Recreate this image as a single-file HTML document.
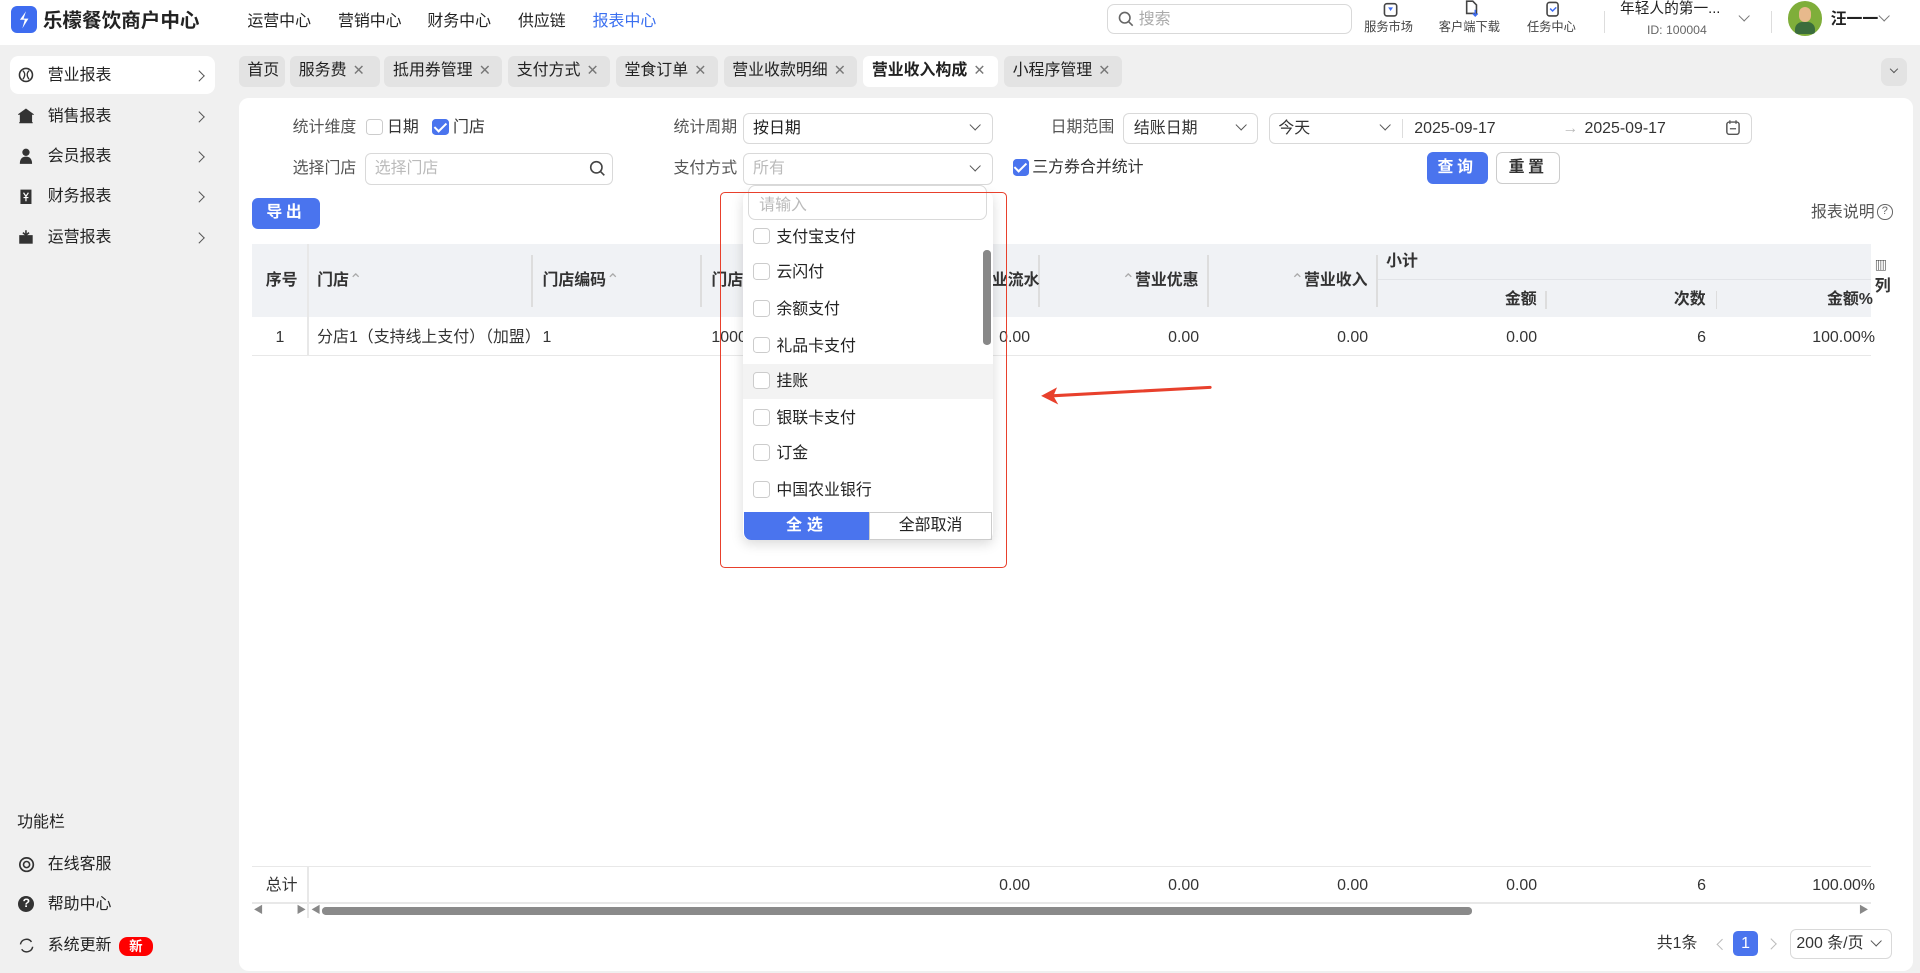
<!DOCTYPE html>
<html><head><meta charset="utf-8">
<style>
html,body{margin:0;padding:0;overflow:hidden}
body{width:1920px;height:973px;background:#f0f0f0;font-family:"Liberation Sans","Noto Sans CJK SC",sans-serif;color:#333}
#w{position:absolute;left:0;top:0;width:1568px;height:795px;zoom:1.22449;font-size:13px;line-height:16px}
.a{position:absolute;white-space:nowrap}
.hdr{left:0;top:0;width:1568px;height:37px;background:#fff}
.nav{top:10px;font-size:13px;color:#222}
.cb{position:absolute;width:12px;height:12px;border:1px solid #ccc;border-radius:3px;background:#fff}
.cbk{background:#4a74ee;border-color:#4a74ee}
.cbk:after{content:"";position:absolute;left:3px;top:0px;width:4px;height:8px;border:solid #fff;border-width:0 2px 2px 0;transform:rotate(45deg)}
.inp{position:absolute;border:1px solid #d9d9d9;border-radius:5px;background:#fff;box-sizing:border-box}
.chev{position:absolute;width:6px;height:6px;border:solid #555;border-width:0 1.3px 1.3px 0;transform:rotate(45deg)}
.chr{position:absolute;width:6px;height:6px;border:solid #555;border-width:1.3px 1.3px 0 0;transform:rotate(45deg)}
.tab{position:absolute;top:46px;height:25px;line-height:25px;background:#e3e3e3;border-radius:5px;padding:0 7px;font-size:13px;color:#222;box-sizing:border-box;white-space:nowrap;overflow:hidden}
.tab i{font-style:normal;color:#777;margin-left:5px;font-size:12px}
.side{left:39px;font-size:13px;color:#222}
.th{font-weight:bold;color:#333}
.dd{top:0;font-size:13px;color:#222}
</style></head><body>
<div id="w">
<div class="a hdr"></div>
<div class="a" style="left:9px;top:5px;width:21px;height:22px;background:#3e6cf0;border-radius:5px"></div>
<svg class="a" style="left:12px;top:8px" width="15" height="16" viewBox="0 0 15 16"><path d="M9 1 L4 8 L8 8 L6 15 L11 7 L7 7 Z" fill="#fff"/></svg>
<div class="a" style="left:35px;top:7px;font-size:16px;line-height:20px;font-weight:bold;color:#222">乐檬餐饮商户中心</div>
<div class="a nav" style="left:202px">运营中心</div>
<div class="a nav" style="left:276px">营销中心</div>
<div class="a nav" style="left:349px">财务中心</div>
<div class="a nav" style="left:423px">供应链</div>
<div class="a nav" style="left:484px;color:#3a6ff0">报表中心</div>
<div class="inp" style="left:904px;top:3px;width:200px;height:25px;border-radius:6px"></div>
<svg class="a" style="left:913px;top:9px" width="13" height="13"><circle cx="5.5" cy="5.5" r="4.3" stroke="#666" stroke-width="1.3" fill="none"/><path d="M8.7 8.7 L12 12" stroke="#666" stroke-width="1.3"/></svg>
<div class="a" style="left:930px;top:8px;color:#aaa;font-size:13px">搜索</div>
<svg class="a" style="left:1129px;top:0" width="14" height="14"><rect x="2" y="3" width="10" height="10" rx="2" fill="none" stroke="#444" stroke-width="1.3"/><path d="M5 6 h4 l-2 3z" fill="#3e6cf0"/></svg>
<svg class="a" style="left:1195px;top:0" width="14" height="14"><path d="M3 1 h5 l3 3 v7 h-8z" fill="none" stroke="#444" stroke-width="1.3"/><path d="M10 8 v5 M8 11 l2 2 l2-2" stroke="#3e6cf0" fill="none" stroke-width="1.2"/></svg>
<svg class="a" style="left:1261px;top:0" width="14" height="14"><rect x="2.5" y="2" width="9" height="11" rx="2" fill="none" stroke="#444" stroke-width="1.3"/><path d="M5 7 l2 2 l3-3" stroke="#3e6cf0" fill="none" stroke-width="1.2"/></svg>
<div class="a" style="left:1114px;top:15px;font-size:10px;color:#444">服务市场</div>
<div class="a" style="left:1175px;top:15px;font-size:10px;color:#444">客户端下载</div>
<div class="a" style="left:1247px;top:15px;font-size:10px;color:#444">任务中心</div>
<div class="a" style="left:1310px;top:9px;width:1px;height:18px;background:#ddd"></div>
<div class="a" style="left:1323px;top:0px;font-size:12px;color:#222">年轻人的第一...</div>
<div class="a" style="left:1345px;top:17px;font-size:10px;color:#666">ID: 100004</div>
<div class="chev" style="left:1421px;top:10px;border-color:#777"></div>
<div class="a" style="left:1446px;top:9px;width:1px;height:18px;background:#ddd"></div>
<div class="a" style="left:1460px;top:1px;width:28px;height:28px;border-radius:50%;background:#7fae3a;overflow:hidden"></div>
<div class="a" style="left:1469px;top:6px;width:10px;height:12px;border-radius:5px;background:#e7b98c"></div>
<div class="a" style="left:1466px;top:18px;width:16px;height:10px;border-radius:6px 6px 2px 2px;background:#3b6d3c"></div>
<div class="a" style="left:1495px;top:8px;font-size:13px;font-weight:bold;color:#222">汪一一</div>
<div class="chev" style="left:1535px;top:10px;border-color:#777"></div>

<!-- sidebar -->
<div class="a" style="left:8px;top:46px;width:168px;height:31px;background:#fff;border-radius:7px"></div>
<svg class="a" style="left:15px;top:55px" width="13" height="13"><circle cx="6.5" cy="6.5" r="5.3" fill="none" stroke="#333" stroke-width="1.3"/><path d="M4 3 q3 3 0 7 M9 3 q-3 3 0 7" stroke="#333" fill="none"/></svg>
<div class="a side" style="top:54px">营业报表</div>
<svg class="a" style="left:15px;top:88px" width="13" height="13"><path d="M1 5 L6.5 1 L12 5 Z M2 6 h9 v5 h-9z M1 12 h11" fill="#333" stroke="#333"/></svg>
<div class="a side" style="top:87px">销售报表</div>
<svg class="a" style="left:15px;top:121px" width="13" height="13"><circle cx="6.5" cy="3.5" r="3" fill="#333"/><path d="M1.5 13 q0-6 5-6 q5 0 5 6z" fill="#333"/></svg>
<div class="a side" style="top:120px">会员报表</div>
<svg class="a" style="left:15px;top:154px" width="13" height="13"><rect x="2" y="0.5" width="9" height="12" fill="#333"/><path d="M4.5 3 l2 3 l2-3 M6.5 6 v4 M4.5 7 h4" stroke="#fff" fill="none"/></svg>
<div class="a side" style="top:153px">财务报表</div>
<svg class="a" style="left:15px;top:187px" width="13" height="13"><path d="M1 5 h11 v7 h-11z" fill="#333"/><path d="M6.5 1 v5 M4 3 l2.5 2 l2.5-2" stroke="#333" fill="none" stroke-width="1.3"/></svg>
<div class="a side" style="top:186px">运营报表</div>
<div class="chr" style="left:159px;top:59px"></div>
<div class="chr" style="left:159px;top:92px"></div>
<div class="chr" style="left:159px;top:125px"></div>
<div class="chr" style="left:159px;top:158px"></div>
<div class="chr" style="left:159px;top:191px"></div>
<div class="a" style="left:14px;top:664px;color:#222">功能栏</div>
<svg class="a" style="left:15px;top:699px" width="14" height="14"><circle cx="7" cy="7" r="5.5" fill="none" stroke="#333" stroke-width="1.4"/><circle cx="7" cy="7" r="2.5" fill="none" stroke="#333" stroke-width="1.3"/></svg>
<div class="a side" style="top:698px">在线客服</div>
<div class="a" style="left:15px;top:732px;width:13px;height:13px;border-radius:50%;background:#333;color:#fff;font-size:10px;line-height:13px;text-align:center;font-weight:bold">?</div>
<div class="a side" style="top:731px">帮助中心</div>
<svg class="a" style="left:15px;top:765px" width="14" height="14"><path d="M2 6 a5 5 0 0 1 9-2 M12 8 a5 5 0 0 1-9 2" fill="none" stroke="#333" stroke-width="1.2"/></svg>
<div class="a side" style="top:764px">系统更新</div>
<div class="a" style="left:97px;top:765px;width:28px;height:16px;background:#f00;border-radius:7px;color:#fff;font-size:11px;font-weight:bold;text-align:center;line-height:16px">新</div>

<!-- tabs -->
<div class="tab" style="left:195px;width:38px">首页</div>
<div class="tab" style="left:237px;width:73px">服务费<i>✕</i></div>
<div class="tab" style="left:314px;width:96px">抵用券管理<i>✕</i></div>
<div class="tab" style="left:415px;width:83px">支付方式<i>✕</i></div>
<div class="tab" style="left:503px;width:83px">堂食订单<i>✕</i></div>
<div class="tab" style="left:591px;width:109px">营业收款明细<i>✕</i></div>
<div class="tab" style="left:705px;width:110px;background:#fff;font-weight:bold">营业收入构成<i style="font-weight:normal">✕</i></div>
<div class="tab" style="left:820px;width:96px">小程序管理<i>✕</i></div>
<div class="a" style="left:1536px;top:47px;width:21px;height:23px;background:#e3e3e3;border-radius:6px"></div>
<div class="chev" style="left:1544px;top:54px;width:4px;height:4px"></div>

<!-- panel -->
<div class="a" style="left:195px;top:80px;width:1367px;height:713px;background:#fff;border-radius:8px"></div>
<div class="a" style="left:239px;top:96px;color:#555">统计维度</div>
<div class="cb" style="left:299px;top:97px"></div><div class="a" style="left:316px;top:96px">日期</div>
<div class="cb cbk" style="left:353px;top:97px"></div><div class="a" style="left:370px;top:96px">门店</div>
<div class="a" style="left:550px;top:96px;color:#555">统计周期</div>
<div class="inp" style="left:607px;top:92px;width:204px;height:26px"></div>
<div class="a" style="left:615px;top:97px;color:#222">按日期</div><div class="chev" style="left:793px;top:99px"></div>
<div class="a" style="left:858px;top:96px;color:#555">日期范围</div>
<div class="inp" style="left:917px;top:92px;width:110px;height:26px"></div>
<div class="a" style="left:926px;top:97px">结账日期</div><div class="chev" style="left:1010px;top:99px"></div>
<div class="inp" style="left:1036px;top:92px;width:395px;height:26px"></div>
<div class="a" style="left:1044px;top:97px">今天</div><div class="chev" style="left:1128px;top:99px"></div>
<div class="a" style="left:1145px;top:97px;width:1px;height:16px;background:#ddd"></div>
<div class="a" style="left:1155px;top:97px">2025-09-17</div>
<div class="a" style="left:1276px;top:97px;color:#bbb">→</div>
<div class="a" style="left:1294px;top:97px">2025-09-17</div>
<svg class="a" style="left:1409px;top:97px" width="13" height="14"><rect x="1.5" y="2.5" width="10" height="10" rx="2" fill="none" stroke="#555" stroke-width="1.2"/><path d="M4 1 v3 M9 1 v3 M4 8 h5" stroke="#555"/></svg>

<div class="a" style="left:239px;top:130px;color:#555">选择门店</div>
<div class="inp" style="left:298px;top:125px;width:203px;height:26px"></div>
<div class="a" style="left:306px;top:130px;color:#bbb">选择门店</div>
<svg class="a" style="left:481px;top:131px" width="14" height="14"><circle cx="6" cy="6" r="4.6" stroke="#444" stroke-width="1.3" fill="none"/><path d="M9.3 9.3 L12.5 12.5" stroke="#444" stroke-width="1.3"/></svg>
<div class="a" style="left:550px;top:130px;color:#555">支付方式</div>
<div class="inp" style="left:607px;top:125px;width:204px;height:26px"></div>
<div class="a" style="left:615px;top:130px;color:#bbb">所有</div><div class="chev" style="left:793px;top:132px"></div>
<div class="cb cbk" style="left:827px;top:130px"></div><div class="a" style="left:843px;top:129px">三方券合并统计</div>
<div class="a" style="left:1165px;top:124px;width:50px;height:26px;background:#4a74ee;border-radius:5px;color:#fff;text-align:center;line-height:26px;font-weight:bold;letter-spacing:3px">查询</div>
<div class="a" style="left:1222px;top:124px;width:52px;height:26px;border:1px solid #ccc;box-sizing:border-box;border-radius:5px;text-align:center;line-height:24px;font-weight:bold;letter-spacing:3px">重置</div>
<div class="a" style="left:206px;top:162px;width:55px;height:25px;background:#4a74ee;border-radius:5px;color:#fff;text-align:center;line-height:25px;font-weight:bold;letter-spacing:3px">导出</div>
<div class="a" style="left:1479px;top:166px;color:#555">报表说明</div>
<div class="a" style="left:1533px;top:167px;width:11px;height:11px;border:1px solid #666;border-radius:50%;font-size:9px;line-height:11px;text-align:center;color:#666">?</div>

<!-- table -->
<div class="a" style="left:206px;top:199px;width:1322px;height:60px;background:#f0f2f5"></div>
<div class="a" style="left:1124px;top:228px;width:404px;height:1px;background:#e2e4e8"></div>
<div class="a" style="left:251px;top:199px;width:1px;height:92px;background:#e8e8e8"></div>
<div class="a" style="left:434px;top:208px;width:1px;height:43px;background:#ddd"></div>
<div class="a" style="left:572px;top:208px;width:1px;height:43px;background:#ddd"></div>
<div class="a" style="left:848px;top:208px;width:1px;height:43px;background:#ddd"></div>
<div class="a" style="left:986px;top:208px;width:1px;height:43px;background:#ddd"></div>
<div class="a" style="left:1124px;top:208px;width:1px;height:43px;background:#ddd"></div>
<div class="a th" style="left:217px;top:221px">序号</div>
<div class="a th" style="left:259px;top:221px">门店<span style="color:#aaa;font-weight:normal">⌃</span></div>
<div class="a th" style="left:443px;top:221px">门店编码<span style="color:#aaa;font-weight:normal">⌃</span></div>
<div class="a th" style="left:581px;top:221px">门店</div>
<div class="a th" style="left:810px;top:221px">业流水</div>
<div class="a th" style="left:916px;top:221px"><span style="color:#aaa;font-weight:normal">⌃</span>营业优惠</div>
<div class="a th" style="left:1054px;top:221px"><span style="color:#aaa;font-weight:normal">⌃</span>营业收入</div>
<div class="a th" style="left:1132px;top:206px">小计</div>
<div class="a th" style="left:1229px;top:237px">金额</div>
<div class="a th" style="left:1367px;top:237px">次数</div>
<div class="a th" style="left:1492px;top:237px">金额%</div>
<div class="a" style="left:1262px;top:238px;width:1px;height:14px;background:#ddd"></div>
<div class="a" style="left:1401px;top:238px;width:1px;height:14px;background:#ddd"></div>
<div class="a th" style="left:1531px;top:210px;font-size:10px">▥</div>
<div class="a th" style="left:1531px;top:226px">列</div>
<div class="a" style="left:206px;top:290px;width:1322px;height:1px;background:#e8e8e8"></div>
<div class="a" style="left:225px;top:268px">1</div>
<div class="a" style="left:259px;top:268px">分店1（支持线上支付）（加盟）</div>
<div class="a" style="left:443px;top:268px">1</div>
<div class="a" style="left:581px;top:268px">1000</div>
<div class="a" style="left:816px;top:268px">0.00</div>
<div class="a" style="left:954px;top:268px">0.00</div>
<div class="a" style="left:1092px;top:268px">0.00</div>
<div class="a" style="left:1230px;top:268px">0.00</div>
<div class="a" style="left:1386px;top:268px">6</div>
<div class="a" style="left:1480px;top:268px">100.00%</div>

<div class="a" style="left:206px;top:707px;width:1322px;height:1px;background:#e8e8e8"></div>
<div class="a" style="left:206px;top:737px;width:1322px;height:1px;background:#e8e8e8"></div>
<div class="a" style="left:251px;top:708px;width:1px;height:42px;background:#e8e8e8"></div>
<div class="a" style="left:217px;top:715px">总计</div>
<div class="a" style="left:816px;top:715px">0.00</div>
<div class="a" style="left:954px;top:715px">0.00</div>
<div class="a" style="left:1092px;top:715px">0.00</div>
<div class="a" style="left:1230px;top:715px">0.00</div>
<div class="a" style="left:1386px;top:715px">6</div>
<div class="a" style="left:1480px;top:715px">100.00%</div>
<div class="a" style="left:207px;top:739px;font-size:8px;color:#888;line-height:10px">◀</div>
<div class="a" style="left:242px;top:739px;font-size:8px;color:#888;line-height:10px">▶</div>
<div class="a" style="left:254px;top:739px;font-size:8px;color:#888;line-height:10px">◀</div>
<div class="a" style="left:1518px;top:739px;font-size:8px;color:#888;line-height:10px">▶</div>
<div class="a" style="left:263px;top:741px;width:939px;height:6px;background:#8a8a8a;border-radius:3px"></div>

<div class="a" style="left:1353px;top:763px">共1条</div>
<div class="chr" style="left:1403px;top:768px;transform:rotate(-135deg);border-color:#bbb"></div>
<div class="a" style="left:1415px;top:760px;width:21px;height:21px;background:#4a74ee;border-radius:4px;color:#fff;text-align:center;line-height:21px">1</div>
<div class="chr" style="left:1443px;top:768px;border-color:#bbb"></div>
<div class="inp" style="left:1462px;top:759px;width:83px;height:24px"></div>
<div class="a" style="left:1467px;top:763px">200 条/页</div>
<div class="chev" style="left:1529px;top:765px"></div>

<!-- dropdown -->
<div class="a" style="left:607px;top:157px;width:204px;height:284px;background:#fff;border-radius:6px;box-shadow:0 3px 10px rgba(0,0,0,.15)"></div>
<div class="inp" style="left:611px;top:151px;width:195px;height:29px;border-radius:6px"></div>
<div class="a" style="left:620px;top:160px;color:#bbb">请输入</div>
<div class="a" style="left:607px;top:297px;width:204px;height:29px;background:#f3f3f3"></div>
<div class="cb" style="left:615px;top:186px"></div><div class="a dd" style="left:634px;top:186px">支付宝支付</div>
<div class="cb" style="left:615px;top:215px"></div><div class="a dd" style="left:634px;top:215px">云闪付</div>
<div class="cb" style="left:615px;top:245px"></div><div class="a dd" style="left:634px;top:245px">余额支付</div>
<div class="cb" style="left:615px;top:275px"></div><div class="a dd" style="left:634px;top:275px">礼品卡支付</div>
<div class="cb" style="left:615px;top:304px"></div><div class="a dd" style="left:634px;top:304px">挂账</div>
<div class="cb" style="left:615px;top:334px"></div><div class="a dd" style="left:634px;top:334px">银联卡支付</div>
<div class="cb" style="left:615px;top:363px"></div><div class="a dd" style="left:634px;top:363px">订金</div>
<div class="cb" style="left:615px;top:393px"></div><div class="a dd" style="left:634px;top:393px">中国农业银行</div>
<div class="a" style="left:803px;top:204px;width:6px;height:78px;background:#888;border-radius:3px"></div>
<div class="a" style="left:608px;top:418px;width:102px;height:23px;background:#4a74ee;border-radius:0 0 0 6px;color:#fff;text-align:center;line-height:23px;font-weight:bold;letter-spacing:4px">全选</div>
<div class="a" style="left:710px;top:418px;width:100px;height:23px;border:1px solid #ccc;box-sizing:border-box;text-align:center;line-height:21px;color:#222">全部取消</div>

<div class="a" style="left:588px;top:157px;width:234px;height:307px;border:1px solid #e8402c;border-radius:4px;box-sizing:border-box"></div>
<svg class="a" style="left:845px;top:310px" width="150" height="22"><path d="M143 6 L12 13" stroke="#e8402c" stroke-width="2.5" stroke-linecap="round"/><path d="M5 13 L18 6 L15 13 L19 20 Z" fill="#e8402c"/></svg>
</div>
</body></html>
